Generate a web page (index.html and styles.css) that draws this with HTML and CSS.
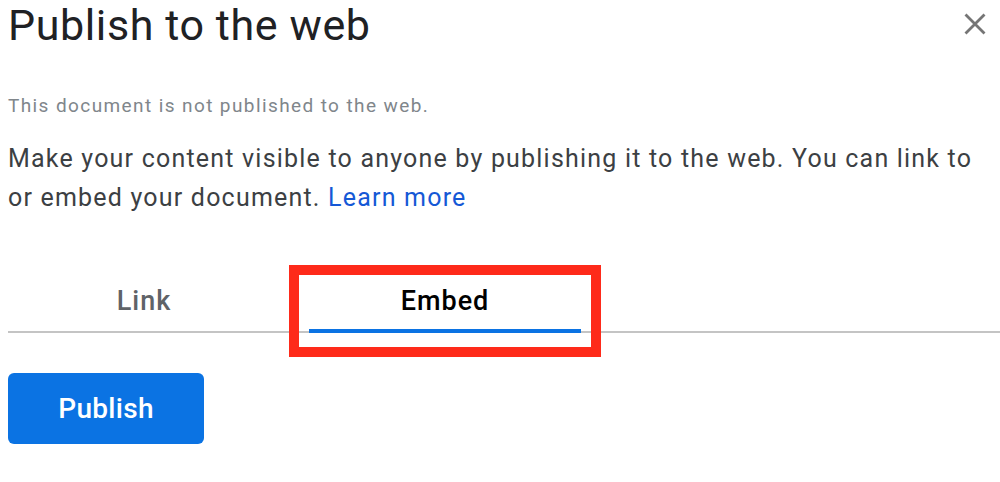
FILE: index.html
```html
<!DOCTYPE html><html lang="en">
<head>
  <meta charset="UTF-8">
  <title>Publish to the web</title>
  <meta name="viewport" content="width=device-width, initial-scale=1.0">
  <link rel="stylesheet" href="styles.css">
</head>
<body>
  <div class="dialog">
    <div class="dialog-header">
      <h1>Publish to the web</h1>
      <button class="close-button" aria-label="Close">
        <svg width="22" height="22" viewBox="0 0 22 22">
          <path d="M1.5 1.5 L20.5 20.5 M20.5 1.5 L1.5 20.5" stroke="#757575" stroke-width="2.8" fill="none"/>
        </svg>
      </button>
    </div>
    <p class="status">This document is not published to the web.</p>
    <p class="intro">Make your content visible to anyone by publishing it to the web. You can link to or embed your document. <a href="#">Learn more</a></p>
    <div class="tabs">
      <div class="tab">Link</div>
      <div class="tab active">Embed</div>
    </div>
    <button class="publish-button">Publish</button>
  </div>
</body>
</html>
```

FILE: styles.css
```css
* {
  box-sizing: border-box;
}

html, body {
  margin: 0;
  padding: 0;
  background: white;
  font-family: Roboto, "Liberation Sans", Arial, sans-serif;
}

.dialog {
  padding: 0 0 0 8px;
}

.dialog-header {
  display: flex;
  justify-content: space-between;
  align-items: flex-start;
  padding-right: 14px;
}

h1 {
  margin: 0;
  font-size: 43px;
  font-weight: 400;
  line-height: 51px;
  letter-spacing: 0.6px;
  color: #202124;
}

.close-button {
  background: none;
  border: none;
  padding: 0;
  margin-top: 13px;
  width: 22px;
  height: 22px;
  cursor: pointer;
}

.close-button svg {
  display: block;
}

.status {
  margin: 43px 0 0;
  font-size: 19px;
  line-height: 24px;
  letter-spacing: 1.4px;
  color: #80868b;
}

.intro {
  margin: 21px 0 0;
  padding-right: 8px;
  font-size: 25px;
  line-height: 39px;
  letter-spacing: 1.2px;
  color: #3c4043;
}

.intro a {
  color: #1558d6;
  text-decoration: none;
}

.tabs {
  display: flex;
  gap: 29px;
  margin-top: 58px;
  border-bottom: 2px solid #c4c4c4;
}

.tab {
  position: relative;
  width: 272px;
  padding: 11px 0 13px;
  margin-bottom: -2px;
  border-bottom: 4px solid transparent;
  text-align: center;
  font-size: 27px;
  font-weight: 500;
  line-height: 30px;
  letter-spacing: 1px;
  color: #5f6368;
}

.tab.active {
  color: #000;
  border-bottom-color: #0b73e3;
}

/* highlight box drawn round the selected tab */
.tab.active::after {
  content: "";
  position: absolute;
  top: -10px;
  left: -20px;
  right: -20px;
  bottom: -28px;
  border: 10px solid #fe2a1a;
}

.publish-button {
  margin-top: 40px;
  width: 196px;
  height: 71px;
  border: none;
  border-radius: 6px;
  background-color: #0b73e3;
  color: white;
  font-family: Roboto, "Liberation Sans", Arial, sans-serif;
  font-size: 28px;
  font-weight: 500;
  letter-spacing: 0.3px;
  cursor: pointer;
}
```
